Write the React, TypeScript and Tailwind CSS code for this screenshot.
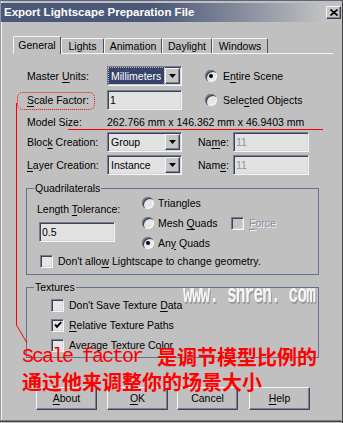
import React from "react";

const sunken =
  "border border-t-[#767c92] border-l-[#767c92] border-b-[#f6f6f6] border-r-[#f6f6f6] shadow-[inset_1px_1px_0_#3e4458,inset_-1px_-1px_0_#d6d6d6]";
const raised =
  "border border-t-[#f4f4f4] border-l-[#f4f4f4] border-b-[#3e4458] border-r-[#3e4458] shadow-[inset_-1px_-1px_0_#7c8296]";

const U = ({ c }: { c: string }) => (
  <span className="underline underline-offset-[2px] decoration-1">{c}</span>
);

function DropBtn() {
  return (
    <div className={`w-[15px] h-[16px] mr-[1px] shrink-0 flex items-center justify-center bg-[#c6c6c6] ${raised}`}>
      <svg width="7" height="4" viewBox="0 0 7 4">
        <path d="M0 0h7L3.5 4z" fill="#000" />
      </svg>
    </div>
  );
}

function Select({ value, hl = false }: { value: string; hl?: boolean }) {
  return (
    <div className={`w-[75px] h-[20px] shrink-0 flex items-center bg-[#e2e2e2] ${sunken}`}>
      <div
        className={`flex-1 self-stretch m-[1px] flex items-center pl-[2px] ${
          hl ? "bg-[#36426c] text-white outline-1 outline-dotted outline-[#b8b8b8]" : ""
        }`}
      >
        {value}
      </div>
      <DropBtn />
    </div>
  );
}

function Field({ value, w, dim = false, className = "" }: { value: string; w: string; dim?: boolean; className?: string }) {
  return (
    <div className={`${w} h-[20px] flex items-center pl-[2px] bg-[#e2e2e2] ${sunken} ${className}`}>
      <span className={dim ? "text-[#8e94aa]" : ""}>{value}</span>
    </div>
  );
}

function Radio({ on = false }: { on?: boolean }) {
  return (
    <span className="w-[12px] h-[12px] shrink-0 rounded-full bg-[#e6e6e6] shadow-[inset_1px_1px_0_#767c92,inset_2px_2px_0_#3e4458,inset_-1px_-1px_0_#f6f6f6] flex items-center justify-center">
      {on && <span className="w-[4px] h-[4px] rounded-full bg-black" />}
    </span>
  );
}

function Check({ on = false, dim = false }: { on?: boolean; dim?: boolean }) {
  return (
    <span className={`w-[13px] h-[13px] shrink-0 flex items-center justify-center ${dim ? "bg-[#c4c4c4]" : "bg-[#e6e6e6]"} ${sunken}`}>
      {on && (
        <svg width="8" height="8" viewBox="0 0 8 8">
          <polyline points="1,3.5 3,5.8 7.2,1.2" fill="none" stroke="#000" strokeWidth="2" />
        </svg>
      )}
    </span>
  );
}

const tabBase =
  "flex items-center justify-center border-t border-l border-r border-t-[#f4f4f4] border-l-[#f4f4f4] border-r-[#4a5064] rounded-t-[2px]";

export default function App() {
  return (
    <div className="relative w-[343px] h-[423px] overflow-hidden bg-[#c0c0c0] text-black text-[10.5px] leading-[13px] font-['Liberation_Sans',Arial,sans-serif] shadow-[inset_1px_0_0_#9a9a9a,inset_2px_0_0_#f2f2f2,inset_-1px_0_0_#404040]">
      <div className="h-[3px] border-t border-[#5c6480]" />

      {/* Title bar */}
      <div className="mx-[1px] h-[19px] flex items-center pl-[3px] bg-linear-to-r from-[#4b5878] from-45% to-[#c2c2c2] to-95%">
        <span className="font-bold text-white text-[11.5px]">Export Lightscape Preparation File</span>
        <div className={`ml-auto mr-[1px] w-[15px] h-[13px] bg-[#c6c6c6] flex items-center justify-center ${raised}`}>
          <svg width="8" height="7" viewBox="0 0 8 7">
            <path d="M0.5 0.5 7.5 6.5 M7.5 0.5 0.5 6.5" stroke="#000" strokeWidth="1.6" />
          </svg>
        </div>
      </div>

      {/* Tabs */}
      <div className="ml-[13px] mt-[14px] w-[320px] h-[18px] flex items-end border-b border-[#f4f4f4]">
        <div className={`${tabBase} w-[48px] h-[18px] -mb-px bg-[#c0c0c0]`}>General</div>
        <div className={`${tabBase} w-[43px] h-[15px]`}>Lights</div>
        <div className={`${tabBase} w-[58px] h-[15px]`}>Animation</div>
        <div className={`${tabBase} w-[50px] h-[15px]`}>Daylight</div>
        <div className={`${tabBase} w-[56px] h-[15px]`}>Windows</div>
      </div>

      {/* Top rows */}
      <div className="ml-[27px] mt-[12px] h-[20px] flex items-center">
        <span className="w-[80px]">Master <U c="U" />nits:</span>
        <Select value="Millimeters" hl />
        <span className="ml-[23px]"><Radio on /></span>
        <span className="ml-[6px]">E<U c="n" />tire Scene</span>
      </div>
      <div className="ml-[27px] mt-[4px] h-[20px] flex items-center">
        <span className="w-[80px]"><U c="S" />cale Factor:</span>
        <Field value="1" w="w-[75px]" />
        <span className="ml-[23px]"><Radio /></span>
        <span className="ml-[6px]">Sele<U c="c" />ted Objects</span>
      </div>
      <div className="ml-[27px] mt-[2px] h-[20px] flex items-center">
        <span className="w-[80px]">Model Size:</span>
        <span>262.766 mm x 146.362 mm x 46.9403 mm</span>
      </div>
      <div className="ml-[27px] h-[20px] flex items-center">
        <span className="w-[80px]">Bloc<U c="k" /> Creation:</span>
        <Select value="Group" />
        <span className="ml-[16px] w-[35px]">Na<U c="m" />e:</span>
        <Field value="11" w="w-[76px]" dim />
      </div>
      <div className="ml-[27px] mt-[3px] h-[20px] flex items-center">
        <span className="w-[80px]"><U c="L" />ayer Creation:</span>
        <Select value="Instance" />
        <span className="ml-[16px] w-[35px]">Nam<U c="e" />:</span>
        <Field value="11" w="w-[76px]" dim />
      </div>

      {/* Quadrilaterals */}
      <div className="ml-[26px] mt-[13px] w-[293px] border border-[#68718c]">
        <div className="ml-[7px] -mt-[7px] -mb-[6px] h-[13px] w-fit px-[1px] bg-[#c0c0c0]">Quadrilaterals</div>
        <div className="flex pt-[4px]">
          <div className="w-[115px] pl-[10px]">
            <div className="mt-[10px]">Length <U c="T" />olerance:</div>
            <Field value="0.5" w="w-[76px]" className="ml-[2px] mt-[6px]" />
          </div>
          <div>
            <div className="h-[20px] flex items-center">
              <Radio />
              <span className="ml-[4px]">Triangles</span>
            </div>
            <div className="h-[20px] flex items-center">
              <Radio />
              <span className="ml-[4px] w-[73px]">Mesh <U c="Q" />uads</span>
              <Check dim />
              <span className="ml-[5px] text-[#8a90a4] [text-shadow:1px_1px_0_#f4f4f4]"><U c="F" />orce</span>
            </div>
            <div className="h-[20px] flex items-center">
              <Radio on />
              <span className="ml-[4px]">An<U c="y" /> Quads</span>
            </div>
          </div>
        </div>
        <div className="mt-[1px] h-[14px] pl-[13px] flex items-center">
          <Check />
          <span className="ml-[5px]">Don't allo<U c="w" /> Lightscape to change geometry.</span>
        </div>
        <div className="h-[6px]" />
      </div>

      {/* Textures */}
      <div className="ml-[26px] mt-[12px] w-[293px] border border-[#68718c] pb-[2px]">
        <div className="ml-[7px] -mt-[7px] -mb-[6px] h-[13px] w-fit px-[1px] bg-[#c0c0c0]">Textures</div>
        <div className="pt-[7px] pl-[24px]">
          <div className="h-[20px] flex items-center">
            <Check />
            <span className="ml-[5px]">Don't Save Texture <U c="D" />ata</span>
          </div>
          <div className="h-[20px] flex items-center">
            <Check on />
            <span className="ml-[5px]"><U c="R" />elative Texture Paths</span>
          </div>
          <div className="h-[20px] flex items-center">
            <Check />
            <span className="ml-[5px]">Average Texture Color</span>
          </div>
        </div>
      </div>

      {/* Buttons */}
      <div className="mt-[29px] flex">
        <button className={`ml-[36px] w-[61px] h-[23px] bg-[#c0c0c0] ${raised}`}><U c="A" />bout</button>
        <button className={`ml-[10px] w-[61px] h-[23px] bg-[#c0c0c0] ${raised}`}><U c="O" />K</button>
        <button className={`ml-[9px] w-[61px] h-[23px] bg-[#c0c0c0] ${raised}`}>Cancel</button>
        <button className={`ml-[11px] w-[61px] h-[23px] bg-[#c0c0c0] ${raised}`}><U c="H" />elp</button>
      </div>
      <div className="mt-[10px] h-[2px] border-t border-b border-t-[#8a7c8c] border-b-[#404040]" />

      {/* Watermark */}
      <div className="absolute left-[183px] top-[288px] h-[16px] flex items-center text-[16px] tracking-[-0.8px] font-bold text-[#f6f6f6] scale-y-[1.6] font-['Liberation_Mono',monospace] [text-shadow:1px_1px_0_#9a9a9a]">
        www. snren. com
      </div>

      {/* Red annotation lines */}
      <svg className="absolute left-0 top-0 pointer-events-none" width="343" height="423" viewBox="0 0 343 423">
        <rect x="17.5" y="92.5" width="77" height="17" rx="5" fill="none" stroke="#ff0000" strokeDasharray="1 1" />
        <polyline points="16.5,103 16.5,325 27,343" fill="none" stroke="#ff0000" />
        <line x1="68" y1="129.5" x2="323" y2="129.5" stroke="#ff0000" />
      </svg>

      {/* Red annotation text */}
      <div className="absolute left-[22px] top-[344px] text-[#ff0000] leading-[25px]">
        <div className="h-[25px] flex items-center">
          <span className="text-[20px] tracking-[-2px] font-['Liberation_Mono',monospace]">Scale factor</span>
          <span className="ml-[15px] text-[20px] font-bold font-['Noto_Sans_CJK_SC',sans-serif]">是调节模型比例的</span>
        </div>
        <div className="h-[25px] flex items-center text-[20px] font-bold font-['Noto_Sans_CJK_SC',sans-serif]">
          通过他来调整你的场景大小
        </div>
      </div>
    </div>
  );
}
